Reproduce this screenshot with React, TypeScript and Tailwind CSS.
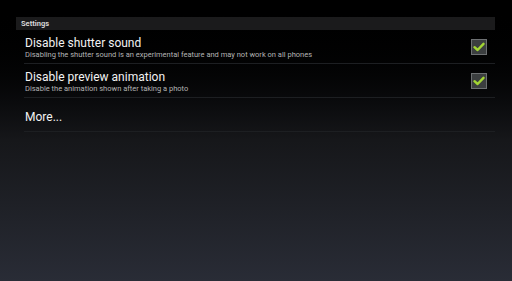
import React from 'react';

type Pref = { title: string; summary?: string; checked?: boolean };

const prefs: Pref[] = [
  {
    title: 'Disable shutter sound',
    summary: 'Disabling the shutter sound is an experimental feature and may not work on all phones',
    checked: true,
  },
  {
    title: 'Disable preview animation',
    summary: 'Disable the animation shown after taking a photo',
    checked: true,
  },
  { title: 'More...' },
];

function CheckBox() {
  return (
    <div className="w-[16px] h-[16px] bg-[#3b3e3f] border border-[#6d7072] flex items-center justify-center">
      <svg width="12" height="10" viewBox="0 0 12 10">
        <path d="M1.5 5.2 L4.6 8 L10.5 1.8" fill="none" stroke="#a3d633" strokeWidth="2.4" strokeLinecap="round" strokeLinejoin="round" />
      </svg>
    </div>
  );
}

export default function App() {
  return (
    <div className="w-[512px] h-[281px] overflow-hidden bg-gradient-to-b from-[#000000] via-[#16171a] to-[#292c36] font-['Roboto',sans-serif]">
      <div className="pt-[17px] pl-[16px] pr-[17px]">
        {/* Category header */}
        <div className="h-[13px] bg-[#1b1b1c] flex items-center pl-[5px]">
          <span className="text-[7.5px] font-bold text-[#d6d6d6] leading-none">Settings</span>
        </div>

        {prefs.map((p) => (
          <div key={p.title} className="pl-[8px]">
            <div className="h-[34px] border-b border-[#1d1f22] flex justify-between pr-[8px]">
              <div className={p.summary ? 'flex flex-col pt-[6px] pl-[1px]' : 'flex flex-col pt-[12px] pl-[1px]'}>
                <span className="text-[12px] text-[#f2f2f2] leading-[14px]">{p.title}</span>
                {p.summary && (
                  <span className="text-[7.5px] text-[#b4b4b4] leading-[9px]">{p.summary}</span>
                )}
              </div>
              {p.checked && (
                <div className="self-center">
                  <CheckBox />
                </div>
              )}
            </div>
          </div>
        ))}
      </div>
    </div>
  );
}
